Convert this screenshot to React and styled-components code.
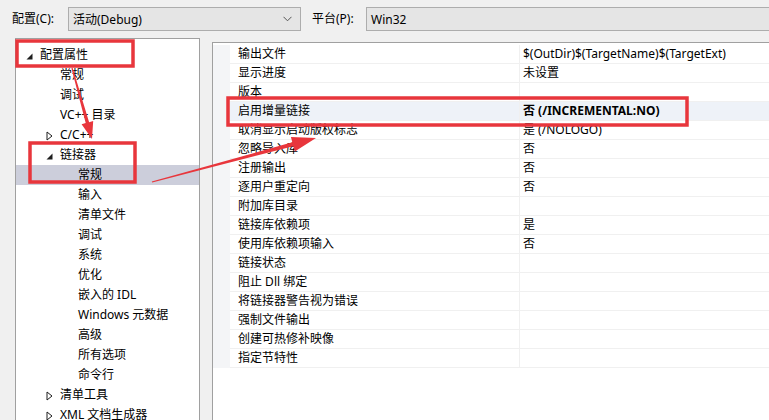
import React from "react";
import styled, { createGlobalStyle } from "styled-components";

const GlobalStyle = createGlobalStyle`
  html, body { margin: 0; padding: 0; background: #f0f0f0; }
  body { font-family: "Noto Sans", "Noto Sans CJK SC", sans-serif; font-size: 12px; color: #000; }
  * { box-sizing: border-box; }
`;

const Window = styled.div`
  position: relative;
  width: 769px;
  height: 420px;
  overflow: hidden;
  background: #f0f0f0;
  display: flex;
  flex-direction: column;
`;

const Toolbar = styled.div`
  height: 38px;
  display: flex;
  align-items: center;
  padding-left: 12px;
  flex-shrink: 0;
`;

const Label = styled.span`
  width: ${(p) => p.$w}px;
  margin-left: ${(p) => p.$ml || 0}px;
  white-space: nowrap;
  line-height: 16px;
`;

const Select = styled.div`
  height: 24px;
  width: ${(p) => (p.$w ? `${p.$w}px` : "auto")};
  flex: ${(p) => (p.$w ? "none" : "1")};
  margin-right: ${(p) => (p.$w ? 0 : -10)}px;
  background: #e5e5e5;
  border: 1px solid #adadad;
  display: flex;
  align-items: center;
  padding-left: 4px;
  padding-right: 8px;
  justify-content: space-between;
`;

const Body = styled.div`
  flex: 1;
  display: flex;
  padding-left: 15px;
  gap: 12px;
  min-height: 0;
`;

const TreePanel = styled.div`
  width: 185px;
  background: #fff;
  border: 1px solid #a0a0a0;
  border-bottom: none;
  padding-top: 6px;
  overflow: hidden;
`;

const TreeRow = styled.div`
  height: 20px;
  display: flex;
  align-items: center;
  padding-left: ${(p) => p.$indent}px;
  background: ${(p) => (p.$selected ? "#cccedb" : "transparent")};
  white-space: nowrap;
  line-height: 20px;
`;

const Expander = styled.span`
  width: 14px;
  margin-left: -14px;
  display: inline-flex;
  align-items: center;
  justify-content: flex-start;
  height: 20px;
  padding-top: 2px;
`;

const PropPanel = styled.div`
  flex: 1;
  margin-top: 4px;
  padding-top: 2px;
  background: #fff;
  border-top: 1px solid #a0a0a0;
  border-left: 1px solid #a0a0a0;
  display: flex;
  flex-direction: column;
`;

const Grid = styled.div`
  display: flex;
  flex-direction: column;
`;

const PropRow = styled.div`
  display: flex;
  height: 19px;
  background: ${(p) => (p.$hl ? "#eef2f8" : "#fff")};
`;

const Gutter = styled.div`
  width: 17px;
  background: #f4f5f7;
  flex-shrink: 0;
`;

const NameCell = styled.div`
  width: 290px;
  padding-left: 8px;
  border-right: 1px solid #f0f0f0;
  border-bottom: 1px solid #f0f0f0;
  line-height: 18px;
  white-space: nowrap;
`;

const ValueCell = styled.div`
  flex: 1;
  padding-left: 3px;
  border-bottom: 1px solid #f0f0f0;
  line-height: 18px;
  white-space: nowrap;
  font-weight: ${(p) => (p.$bold ? 700 : 400)};
`;

const Overlay = styled.svg`
  position: absolute;
  left: 0;
  top: 0;
  pointer-events: none;
`;

const treeItems = [
  { label: "配置属性", lv: 0, exp: "open" },
  { label: "常规", lv: 1 },
  { label: "调试", lv: 1 },
  { label: "VC++ 目录", lv: 1 },
  { label: "C/C++", lv: 1, exp: "closed" },
  { label: "链接器", lv: 1, exp: "open" },
  { label: "常规", lv: 2, selected: true },
  { label: "输入", lv: 2 },
  { label: "清单文件", lv: 2 },
  { label: "调试", lv: 2 },
  { label: "系统", lv: 2 },
  { label: "优化", lv: 2 },
  { label: "嵌入的 IDL", lv: 2 },
  { label: "Windows 元数据", lv: 2 },
  { label: "高级", lv: 2 },
  { label: "所有选项", lv: 2 },
  { label: "命令行", lv: 2 },
  { label: "清单工具", lv: 1, exp: "closed" },
  { label: "XML 文档生成器", lv: 1, exp: "closed" },
];

const indents = [24, 44, 62];

const props = [
  ["输出文件", "$(OutDir)$(TargetName)$(TargetExt)"],
  ["显示进度", "未设置"],
  ["版本", ""],
  ["启用增量链接", "否 (/INCREMENTAL:NO)", true],
  ["取消显示启动版权标志", "是 (/NOLOGO)"],
  ["忽略导入库", "否"],
  ["注册输出", "否"],
  ["逐用户重定向", "否"],
  ["附加库目录", ""],
  ["链接库依赖项", "是"],
  ["使用库依赖项输入", "否"],
  ["链接状态", ""],
  ["阻止 Dll 绑定", ""],
  ["将链接器警告视为错误", ""],
  ["强制文件输出", ""],
  ["创建可热修补映像", ""],
  ["指定节特性", ""],
];

const OpenTri = () => (
  <svg width="7" height="7" viewBox="0 0 7 7">
    <polygon points="6.5,0.5 6.5,6.5 0.5,6.5" fill="#1e1e1e" />
  </svg>
);

const ClosedTri = () => (
  <svg width="7" height="10" viewBox="0 0 7 10">
    <polygon points="1,1 6,5 1,9" fill="none" stroke="#1e1e1e" strokeWidth="1" />
  </svg>
);

const Chevron = () => (
  <svg width="9" height="6" viewBox="0 0 9 6">
    <polyline points="0.5,0.8 4.5,4.8 8.5,0.8" fill="none" stroke="#555" strokeWidth="1" />
  </svg>
);

function arrowPoints(x1, y1, x2, y2, w0, w1, headLen, headW) {
  const dx = x2 - x1;
  const dy = y2 - y1;
  const L = Math.hypot(dx, dy);
  const ux = dx / L;
  const uy = dy / L;
  const nx = -uy;
  const ny = ux;
  const bx = x2 - ux * headLen;
  const by = y2 - uy * headLen;
  const pts = [
    [x1 + (nx * w0) / 2, y1 + (ny * w0) / 2],
    [bx + (nx * w1) / 2, by + (ny * w1) / 2],
    [bx + (nx * headW) / 2, by + (ny * headW) / 2],
    [x2, y2],
    [bx - (nx * headW) / 2, by - (ny * headW) / 2],
    [bx - (nx * w1) / 2, by - (ny * w1) / 2],
    [x1 - (nx * w0) / 2, y1 - (ny * w0) / 2],
  ];
  return pts.map((p) => `${p[0].toFixed(1)},${p[1].toFixed(1)}`).join(" ");
}

const RED = "#e8363c";

export default function App() {
  return (
    <>
      <GlobalStyle />
      <Window>
        <Toolbar>
          <Label $w={56}>配置(C):</Label>
          <Select $w={233}>
            <span>活动(Debug)</span>
            <Chevron />
          </Select>
          <Label $w={54} $ml={11}>平台(P):</Label>
          <Select>
            <span>Win32</span>
          </Select>
        </Toolbar>
        <Body>
          <TreePanel>
            {treeItems.map((it, i) => (
              <TreeRow key={i} $indent={indents[it.lv]} $selected={it.selected}>
                <Expander>
                  {it.exp === "open" && <OpenTri />}
                  {it.exp === "closed" && <ClosedTri />}
                </Expander>
                {it.label}
              </TreeRow>
            ))}
          </TreePanel>
          <PropPanel>
            <Grid>
              {props.map(([n, v, hl], i) => (
                <PropRow key={i} $hl={hl}>
                  <Gutter />
                  <NameCell>{n}</NameCell>
                  <ValueCell $bold={hl}>{v}</ValueCell>
                </PropRow>
              ))}
            </Grid>
          </PropPanel>
        </Body>
        <Overlay width="769" height="420" viewBox="0 0 769 420">
          <rect x="17" y="41" width="116" height="25" fill="none" stroke={RED} strokeWidth="3.5" />
          <rect x="30" y="143" width="105" height="39" fill="none" stroke={RED} strokeWidth="3.5" />
          <rect x="228" y="98" width="459" height="27" fill="none" stroke={RED} strokeWidth="3.5" />
          <polygon points={arrowPoints(72, 68, 92, 139, 1.2, 3.5, 17, 12)} fill={RED} />
          <polygon points={arrowPoints(152, 182, 316, 138, 1.2, 4, 24, 15)} fill={RED} />
        </Overlay>
      </Window>
    </>
  );
}
